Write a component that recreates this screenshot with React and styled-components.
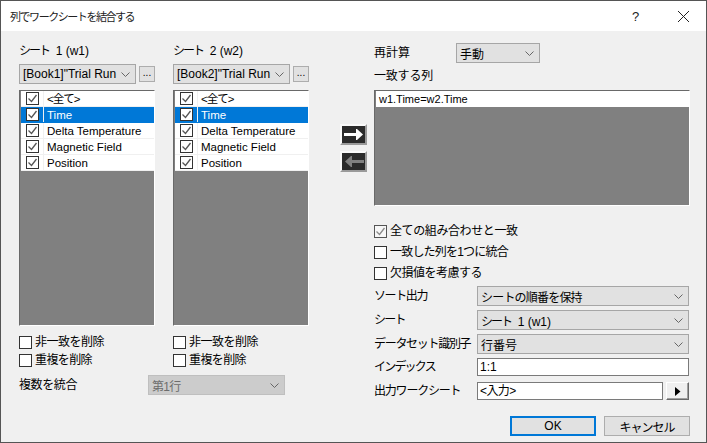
import styled, { createGlobalStyle } from "styled-components";

const FONT = `"Liberation Sans", "Noto Sans CJK JP", sans-serif`;

const sheetColumns = ["Time", "Delta Temperature", "Magnetic Field", "Position"];

function Check({ checked, disabled }) {
  return (
    <CheckBox $disabled={disabled}>
      {checked && (
        <svg width="11" height="11" viewBox="0 0 11 11">
          <path
            d="M1.5 5.5 L4.5 8.5 L9.5 2"
            fill="none"
            stroke={disabled ? "#8a8a8a" : "#555"}
            strokeWidth="1.3"
          />
        </svg>
      )}
    </CheckBox>
  );
}

function Chevron() {
  return (
    <svg width="9" height="5" viewBox="0 0 9 5">
      <path d="M0.5 0.5 L4.5 4.5 L8.5 0.5" fill="none" stroke="#666" strokeWidth="1" />
    </svg>
  );
}

function SheetName({ n }) {
  return (
    <span>
      <Kana>シート</Kana>
      {`\u00a0\u00a0${n} (w${n})`}
    </span>
  );
}

function SheetColumn({ n }) {
  return (
    <SheetCol>
      <Label><SheetName n={n} /></Label>
      <ComboRow>
        <Combo $w={117}>
          <span>{`[Book${n}]"Trial Run`}</span>
          <Chevron />
        </Combo>
        <DotsButton>...</DotsButton>
      </ComboRow>
      <ColumnList>
        <CheckRow>
          <CheckCell><Check checked /></CheckCell>
          <RowText $ls={-1}>&lt;全て&gt;</RowText>
        </CheckRow>
        {sheetColumns.map((c) => (
          <CheckRow key={c} $selected={c === "Time"}>
            <CheckCell $selected={c === "Time"}>
              <Check checked />
            </CheckCell>
            <RowText>{c}</RowText>
          </CheckRow>
        ))}
      </ColumnList>
      <LooseChecks>
        <CheckLabel $ls={-0.5}><Check />非一致を削除</CheckLabel>
        <CheckLabel $ls={-0.6}><Check />重複を削除</CheckLabel>
      </LooseChecks>
    </SheetCol>
  );
}

export default function App() {
  return (
    <Dialog>
      <GlobalStyle />
      <TitleBar>
        <Title>列でワークシートを結合する</Title>
        <HelpMark>?</HelpMark>
        <CloseIcon width="13" height="13" viewBox="0 0 13 13">
          <path d="M1 1 L12 12 M12 1 L1 12" stroke="#222" strokeWidth="1" fill="none" />
        </CloseIcon>
      </TitleBar>
      <Body>
        <LeftPane>
          <SheetColumns>
            <SheetColumn n={1} />
            <SheetColumn n={2} />
          </SheetColumns>
          <MergeRow>
            <Label $ls={-0.4}>複数を統合</Label>
            <Combo $w={137} $disabled $ls={-0.7}>
              <span>第1行</span>
              <Chevron />
            </Combo>
          </MergeRow>
        </LeftPane>
        <ArrowPane>
          <ArrowButton>
            <svg width="20" height="11" viewBox="0 0 20 11">
              <path d="M0 4 H12 V0 H13 L19 5.5 L13 11 H12 V7 H0 Z" fill="#fff" />
            </svg>
          </ArrowButton>
          <ArrowButton>
            <svg width="20" height="11" viewBox="0 0 20 11">
              <path d="M20 4 H8 V0 H7 L1 5.5 L7 11 H8 V7 H20 Z" fill="#808080" />
            </svg>
          </ArrowButton>
        </ArrowPane>
        <RightPane>
          <RecalcRow>
            <Label>再計算</Label>
            <Combo $w={84}>
              <span>手動</span>
              <Chevron />
            </Combo>
          </RecalcRow>
          <MatchLabel $ls={-0.2}>一致する列</MatchLabel>
          <MatchList>
            <MatchItem>w1.Time=w2.Time</MatchItem>
          </MatchList>
          <Options>
            <CheckLabel $ls={-0.4}><Check checked disabled />全ての組み合わせと一致</CheckLabel>
            <CheckLabel $ls={-0.8}><Check />一致した列を1つに統合</CheckLabel>
            <CheckLabel $ls={-0.5}><Check />欠損値を考慮する</CheckLabel>
          </Options>
          <FormGrid>
            <Label $ls={-1.4}>ソート出力</Label>
            <Combo $ls={-0.8}>
              <span>シートの順番を保持</span>
              <Chevron />
            </Combo>
            <Label $ls={-1.7}>シート</Label>
            <Combo>
              <SheetName n={1} />
              <Chevron />
            </Combo>
            <Label $ls={-1.3}>データセット識別子</Label>
            <Combo>
              <span>行番号</span>
              <Chevron />
            </Combo>
            <Label $ls={-1.8}>インデックス</Label>
            <Field>1:1</Field>
            <Label $ls={-1.2} $last>出力ワークシート</Label>
            <OutputRow>
              <Field $ls={-0.6}>&lt;入力&gt;</Field>
              <PlayButton>
                <svg width="7" height="9" viewBox="0 0 7 9">
                  <path d="M1 0 L6.5 4.5 L1 9 Z" fill="#000" />
                </svg>
              </PlayButton>
            </OutputRow>
          </FormGrid>
          <Actions>
            <ActionButton $primary>OK</ActionButton>
            <ActionButton $ls={-1}>キャンセル</ActionButton>
          </Actions>
        </RightPane>
      </Body>
    </Dialog>
  );
}

const GlobalStyle = createGlobalStyle`
  html, body {
    margin: 0;
    padding: 0;
    background: #f0f0f0;
  }
`;

const Dialog = styled.div`
  width: 707px;
  height: 443px;
  box-sizing: border-box;
  border: 1px solid #555;
  background: #f0f0f0;
  font-family: ${FONT};
  font-size: 12px;
  color: #000;
  display: flex;
  flex-direction: column;
  overflow: hidden;
`;

const TitleBar = styled.div`
  height: 30px;
  flex: none;
  background: #fff;
  display: flex;
  align-items: center;
  padding-left: 9px;
`;

const Title = styled.div`
  flex: 1;
  font-size: 11px;
  letter-spacing: -1.45px;
  color: #222;
`;

const HelpMark = styled.div`
  width: 10px;
  font-size: 13px;
  margin-right: 35px;
  color: #222;
`;

const CloseIcon = styled.svg`
  margin-right: 16px;
`;

const Body = styled.div`
  flex: 1;
  display: flex;
  padding: 12px 16px 0 18px;
`;

const LeftPane = styled.div`
  width: 290px;
  display: flex;
  flex-direction: column;
`;

const SheetColumns = styled.div`
  display: flex;
  gap: 18px;
`;

const SheetCol = styled.div`
  width: 136px;
  display: flex;
  flex-direction: column;
`;

const Kana = styled.span`
  letter-spacing: -2px;
`;

const Label = styled.div`
  font-size: 12px;
  line-height: 16px;
  white-space: nowrap;
  letter-spacing: ${(p) => p.$ls || 0}px;
  margin-top: ${(p) => (p.$last ? "2px" : "0")};
`;

const ComboRow = styled.div`
  display: flex;
  align-items: center;
  gap: 3px;
  margin-top: 5px;
`;

const Combo = styled.div`
  box-sizing: border-box;
  width: ${(p) => (p.$w ? `${p.$w}px` : "auto")};
  height: 20px;
  flex: none;
  border: 1px solid ${(p) => (p.$disabled ? "#bfbfbf" : "#a6a6a6")};
  background: ${(p) => (p.$disabled ? "#cccccc" : "#e1e1e1")};
  color: ${(p) => (p.$disabled ? "#6d6d6d" : "#000")};
  display: flex;
  align-items: center;
  justify-content: space-between;
  padding: 0 5px 0 3px;
  font-size: 12px;
  letter-spacing: ${(p) => p.$ls || 0}px;
  white-space: nowrap;
  overflow: hidden;
`;

const DotsButton = styled.div`
  box-sizing: border-box;
  width: 16px;
  height: 16px;
  border: 1px solid #adadad;
  background: #e1e1e1;
  font-size: 10px;
  line-height: 11px;
  text-align: center;
`;

const ColumnList = styled.div`
  box-sizing: border-box;
  height: 236px;
  margin-top: 6px;
  background: #808080;
  border: 1px solid;
  border-color: #696969 #fff #fff #696969;
  padding-left: 1px;
`;

const CheckRow = styled.div`
  height: 16px;
  display: flex;
  box-sizing: border-box;
  background: ${(p) => (p.$selected ? "#0078d7" : "#fff")};
  color: ${(p) => (p.$selected ? "#fff" : "#000")};
  border-bottom: 1px solid ${(p) => (p.$selected ? "#0078d7" : "#f0f0f0")};
`;

const CheckCell = styled.div`
  width: 23px;
  flex: none;
  display: flex;
  align-items: center;
  justify-content: center;
  background: ${(p) => (p.$selected ? "#0078d7" : "#fff")};
  border-right: 1px solid #f0f0f0;
  box-sizing: border-box;
`;

const CheckBox = styled.span`
  box-sizing: border-box;
  width: 13px;
  height: 13px;
  flex: none;
  border: 1px solid ${(p) => (p.$disabled ? "#555" : "#333")};
  background: ${(p) => (p.$disabled ? "#f7f7f7" : "#fff")};
  display: inline-flex;
  align-items: center;
  justify-content: center;
`;

const RowText = styled.div`
  padding: 1px 0 0 3px;
  line-height: 15px;
  font-size: 11.5px;
  white-space: nowrap;
  letter-spacing: ${(p) => p.$ls || 0}px;
`;

const LooseChecks = styled.div`
  display: flex;
  flex-direction: column;
  gap: 5px;
  margin-top: 10px;
`;

const CheckLabel = styled.label`
  display: flex;
  align-items: center;
  gap: 3px;
  height: 13px;
  line-height: 13px;
  white-space: nowrap;
  letter-spacing: ${(p) => p.$ls || 0}px;
`;

const MergeRow = styled.div`
  display: flex;
  align-items: center;
  justify-content: space-between;
  padding-right: 24px;
  margin-top: 8px;
`;

const ArrowPane = styled.div`
  width: 27px;
  margin-left: 31px;
  margin-right: 7px;
  padding-top: 81px;
  display: flex;
  flex-direction: column;
  gap: 6px;
`;

const ArrowButton = styled.div`
  box-sizing: border-box;
  width: 27px;
  height: 21px;
  background: #2b2b2b;
  border: 2px solid;
  border-color: #fafafa #9a9a9a #9a9a9a #fafafa;
  display: flex;
  align-items: center;
  justify-content: center;
`;

const RightPane = styled.div`
  flex: 1;
  display: flex;
  flex-direction: column;
`;

const RecalcRow = styled.div`
  display: flex;
  align-items: center;
  gap: 46px;
`;

const MatchLabel = styled(Label)`
  margin-top: 5px;
`;

const MatchList = styled.div`
  box-sizing: border-box;
  height: 116px;
  margin-top: 6px;
  background: #808080;
  border: 1px solid;
  border-color: #696969 #fff #fff #696969;
  padding-left: 1px;
`;

const MatchItem = styled.div`
  height: 16px;
  background: #fff;
  line-height: 17px;
  padding-left: 3px;
  font-size: 11px;
`;

const Options = styled.div`
  display: flex;
  flex-direction: column;
  gap: 8px;
  margin-top: 19px;
`;

const FormGrid = styled.div`
  display: grid;
  grid-template-columns: 103px 1fr;
  row-gap: 4px;
  align-items: center;
  margin-top: 6px;
  padding-right: 1px;
`;

const Field = styled.div`
  box-sizing: border-box;
  flex: 1;
  height: 18px;
  border: 1px solid #7a7a7a;
  background: #fff;
  line-height: 16px;
  padding-left: 2px;
  letter-spacing: ${(p) => p.$ls || 0}px;
`;

const OutputRow = styled.div`
  display: flex;
  gap: 3px;
  margin-top: 2px;
`;

const PlayButton = styled.div`
  box-sizing: border-box;
  width: 23px;
  height: 18px;
  background: #f0f0f0;
  border: 1px solid;
  border-color: #fff #696969 #696969 #fff;
  box-shadow: inset -1px -1px 0 #a0a0a0;
  display: flex;
  align-items: center;
  justify-content: center;
`;

const Actions = styled.div`
  display: flex;
  justify-content: flex-end;
  gap: 8px;
  margin-top: 16px;
`;

const ActionButton = styled.div`
  box-sizing: border-box;
  width: 86px;
  height: 20px;
  background: #e1e1e1;
  border: ${(p) => (p.$primary ? "2px solid #0078d7" : "1px solid #adadad")};
  display: flex;
  align-items: center;
  justify-content: center;
  letter-spacing: ${(p) => p.$ls || 0}px;
`;
